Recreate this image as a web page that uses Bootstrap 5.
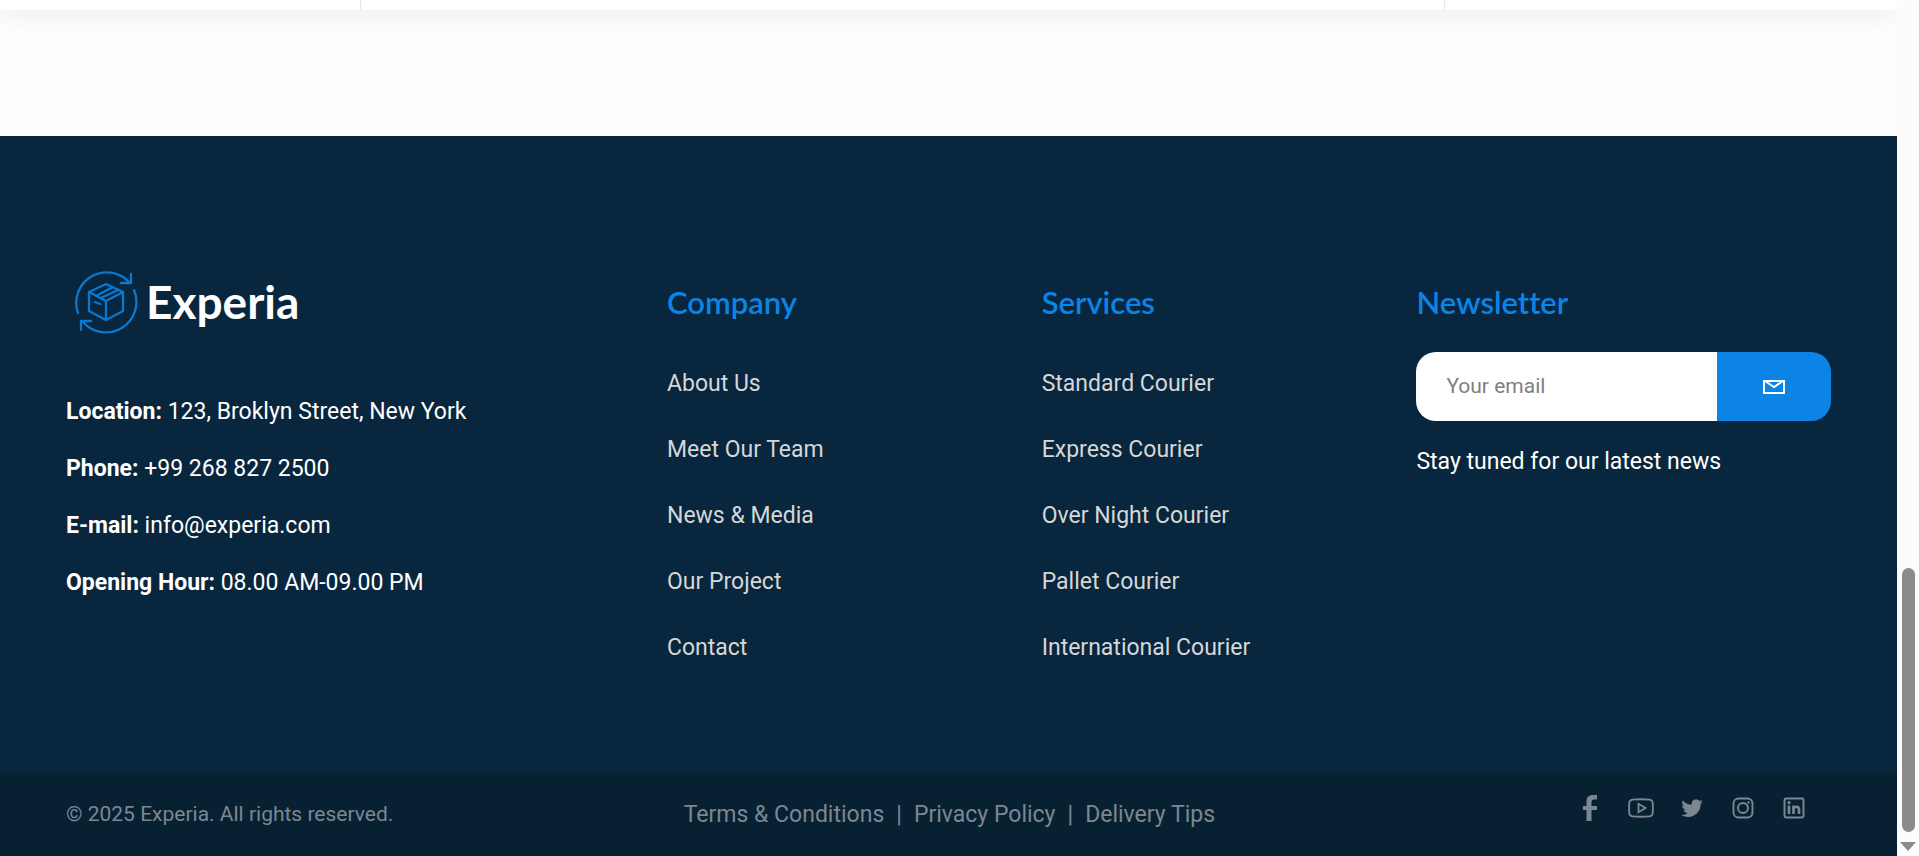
<!DOCTYPE html>
<html lang="en">
<head>
<meta charset="utf-8">
<meta name="viewport" content="width=device-width, initial-scale=1">
<title>Experia</title>
<link href="https://cdn.jsdelivr.net/npm/bootstrap@5.3.0/dist/css/bootstrap.min.css" rel="stylesheet">
<style>
  body { font-family: Roboto, "Liberation Sans", sans-serif; font-size: 23px; line-height: 33px; background: #fefefe; }
  .page { min-height: 100vh; }
  .panel-end { height: 10px; background: #fff; box-shadow: 0 0 28px rgba(0,0,0,.16); }
  .panel-end > div { border-right: 1px solid #e8e8e8; }
  .panel-a { width: 19.05%; }
  .panel-b { width: 57.1%; }
  .spacer { height: 126px; }
  .site-footer { background: #08263d; color: #fff; }
  .footer-main { padding: 128px 66px 100px; }
  .w-brand { width: 34.05%; }
  .w-links { width: 21.23%; }
  .brand { gap: 8px; padding-left: 8px; color: #fff; font-family: "Lato", sans-serif; font-size: 46px; font-weight: 700; line-height: 76px; }
  .contact-lines { gap: 24px; margin-top: 55px; }
  .contact-lines b { font-weight: 700; }
  .col-title { font-family: "Lato", sans-serif; font-size: 31px; font-weight: 600; line-height: 38px; color: #0b84e5; margin: 19px 0 0; font-variant-ligatures: none; }
  .link-list { gap: 33px; margin-top: 46px; }
  .link-list a { color: #d6d7d7; }
  .subscribe { margin-top: 31px; height: 69px; }
  .subscribe .form-control { border: 0; border-radius: 20px 0 0 20px; padding: 0 30px; font-size: 21px; background: #fff; }
  .subscribe .form-control::placeholder { color: #808080; }
  .subscribe .btn { width: 114px; border: 0; border-radius: 0 20px 20px 0; background: #0b84e5; }
  .note { margin-top: 24px; }
  .footer-bar { background: #072133; color: #7b8791; height: 84px; padding: 0 66px; }
  .footer-bar a { color: #7b8791; }
  .copy { width: 35%; font-size: 21px; }
  .legal { gap: 12px; }
  .social { gap: 25px; margin-right: 24px; padding-bottom: 12px; }
  .scroll-track { width: 22px; background: #fcfcfc; padding-bottom: 5px; position: sticky; top: 0; height: 100vh; }
  .scroll-thumb { width: 13px; height: 31%; border-radius: 7px; background: #8b8b8b; margin-bottom: 10px; }
</style>
</head>
<body>
<div class="page d-flex">
  <div class="flex-grow-1 d-flex flex-column overflow-hidden">
    <main>
      <div class="panel-end d-flex"><div class="panel-a"></div><div class="panel-b"></div></div>
      <div class="spacer"></div>
    </main>
    <footer class="site-footer flex-grow-1 d-flex flex-column">
      <div class="footer-main d-flex flex-grow-1">
        <section class="w-brand flex-shrink-0">
          <a href="#" class="brand d-flex align-items-center text-decoration-none">
            <svg width="64" height="64" viewBox="0 0 64 64" fill="none" stroke="#0b78d0" stroke-width="2.300" stroke-linejoin="round" stroke-linecap="round" aria-hidden="true">
              <path d="M4 43A30.500 30.500 0 0 1 55 12"/><path d="M57 4v9H47"/>
              <path d="M60 20A30.500 30.500 0 0 1 9 52"/><path d="M7 60v-9h10"/>
              <path d="M32 14 49 22V41L32 50 15 41V22Z"/><path d="M15 22 32 31 49 22M32 31V50M22 26 39 17M27 28 44 20M21 32l5 2"/>
            </svg>
            <span>Experia</span>
          </a>
          <div class="contact-lines d-flex flex-column">
            <div><b>Location:</b> 123, Broklyn Street, New York</div>
            <div><b>Phone:</b> +99 268 827 2500</div>
            <div><b>E-mail:</b> info@experia.com</div>
            <div><b>Opening Hour:</b> 08.00 AM-09.00 PM</div>
          </div>
        </section>
        <nav class="w-links flex-shrink-0" aria-label="Company">
          <h2 class="col-title">Company</h2>
          <ul class="link-list list-unstyled d-flex flex-column mb-0">
            <li><a class="text-decoration-none" href="#">About Us</a></li>
            <li><a class="text-decoration-none" href="#">Meet Our Team</a></li>
            <li><a class="text-decoration-none" href="#">News &amp; Media</a></li>
            <li><a class="text-decoration-none" href="#">Our Project</a></li>
            <li><a class="text-decoration-none" href="#">Contact</a></li>
          </ul>
        </nav>
        <nav class="w-links flex-shrink-0" aria-label="Services">
          <h2 class="col-title">Services</h2>
          <ul class="link-list list-unstyled d-flex flex-column mb-0">
            <li><a class="text-decoration-none" href="#">Standard Courier</a></li>
            <li><a class="text-decoration-none" href="#">Express Courier</a></li>
            <li><a class="text-decoration-none" href="#">Over Night Courier</a></li>
            <li><a class="text-decoration-none" href="#">Pallet Courier</a></li>
            <li><a class="text-decoration-none" href="#">International Courier</a></li>
          </ul>
        </nav>
        <section class="flex-grow-1">
          <h2 class="col-title">Newsletter</h2>
          <form class="subscribe d-flex">
            <input type="email" class="form-control" placeholder="Your email" aria-label="Your email">
            <button type="button" class="btn flex-shrink-0 d-flex align-items-center justify-content-center" aria-label="Subscribe">
              <svg width="22" height="16" viewBox="0 0 22 16" fill="none" stroke="#fff" stroke-width="2"><path d="M1 2H21V14H1ZM2 2 11 8 20 2"/></svg>
            </button>
          </form>
          <p class="note mb-0">Stay tuned for our latest news</p>
        </section>
      </div>
      <div class="footer-bar d-flex align-items-center">
        <div class="copy">© 2025 Experia. All rights reserved.</div>
        <nav class="legal d-flex" aria-label="Legal">
          <a class="text-decoration-none" href="#">Terms &amp; Conditions</a><span>|</span>
          <a class="text-decoration-none" href="#">Privacy Policy</a><span>|</span>
          <a class="text-decoration-none" href="#">Delivery Tips</a>
        </nav>
        <div class="social d-flex align-items-center ms-auto">
          <a href="#" class="d-flex" aria-label="Facebook"><svg width="26" height="26" viewBox="0 0 26 26" fill="currentColor"><path d="M20 0v4.500h-3c-2 0-2.500 1-2.500 2.500v4H20V15h-5.500v11H9.500V15H6v-4h3.500V6.500C9.500 2 12 0 16 0Z"/></svg></a>
          <a href="#" class="d-flex" aria-label="YouTube"><svg width="26" height="26" viewBox="0 0 26 26" fill="none" stroke="currentColor" stroke-width="1.800"><path d="M4.500 4.700Q13 3.800 21.500 4.700 24.500 5 24.700 8 25.200 13 24.700 18 24.500 21 21.500 21.300 13 22.200 4.500 21.300 1.500 21 1.300 18 .8 13 1.300 8 1.500 5 4.500 4.700Z"/><path d="M10.500 8.800V17.200L17.500 13Z"/></svg></a>
          <a href="#" class="d-flex" aria-label="Twitter"><svg width="26" height="26" viewBox="0 0 24 24" fill="currentColor"><path d="M22 5.900c-.7.300-1.500.500-2.400.6.900-.5 1.500-1.300 1.800-2.200-.8.500-1.700.8-2.600 1A4.100 4.100 0 0 0 11.800 9C8.400 8.900 5.400 7.300 3.400 4.800c-1 1.800-.5 4.200 1.300 5.400-.7 0-1.300-.2-1.900-.5 0 2 1.400 3.700 3.300 4.100-.6.200-1.200.2-1.900.1.500 1.600 2 2.800 3.900 2.800A8.300 8.300 0 0 1 2 18.400 11.700 11.700 0 0 0 20 8c.8-.6 1.500-1.300 2-2.100Z"/></svg></a>
          <a href="#" class="d-flex" aria-label="Instagram"><svg width="26" height="26" viewBox="0 0 26 26" fill="none" stroke="currentColor" stroke-width="1.900"><rect x="3.500" y="3.500" width="19" height="19" rx="5"/><circle cx="13" cy="13" r="5"/><circle cx="18.600" cy="7.400" r="1.200" fill="currentColor" stroke="none"/></svg></a>
          <a href="#" class="d-flex" aria-label="LinkedIn"><svg width="26" height="26" viewBox="0 0 26 26" fill="none" stroke="currentColor" stroke-width="1.900"><rect x="3.500" y="3.500" width="19" height="19" rx="1.500"/><path stroke-width="2.600" d="M8 10.500V19M12.500 10.500V19M12.500 14.500Q12.700 11.700 15.300 11.700 18 11.700 18 14.500V19"/><circle cx="8" cy="7.700" r="1.600" fill="currentColor" stroke="none"/></svg></a>
        </div>
      </div>
    </footer>
  </div>
  <div class="scroll-track flex-shrink-0 d-flex flex-column align-items-center justify-content-end" aria-hidden="true">
    <div class="scroll-thumb"></div>
    <svg width="16" height="9" viewBox="0 0 16 9"><path d="M0 0H16L8 9Z" fill="#8b8b8b"/></svg>
  </div>
</div>
<script src="https://cdn.jsdelivr.net/npm/bootstrap@5.3.0/dist/js/bootstrap.bundle.min.js"></script>
</body>
</html>
